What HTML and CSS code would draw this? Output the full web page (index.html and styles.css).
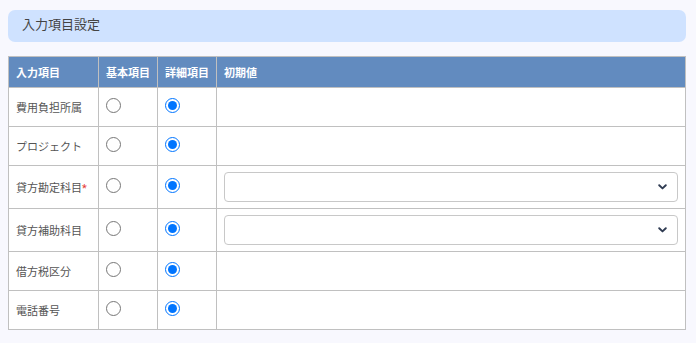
FILE: index.html
```html
<!DOCTYPE html>
<html>
<head>
    <title>入力項目設定</title>
    <meta charset="UTF-8">
    <meta name="viewport" content="width=device-width, initial-scale=1.0">
    <link rel="stylesheet" href="styles.css">
</head>
<body>
    <div class="container">
        <div class="panel-title">入力項目設定</div>
        <table class="item-table">
            <thead>
                <tr>
                    <th class="col-name">入力項目</th>
                    <th class="col-radio">基本項目</th>
                    <th class="col-radio">詳細項目</th>
                    <th>初期値</th>
                </tr>
            </thead>
            <tbody>
                <tr>
                    <td>費用負担所属</td>
                    <td><input type="radio" name="r1"></td>
                    <td><input type="radio" name="r1" checked></td>
                    <td></td>
                </tr>
                <tr>
                    <td>プロジェクト</td>
                    <td><input type="radio" name="r2"></td>
                    <td><input type="radio" name="r2" checked></td>
                    <td></td>
                </tr>
                <tr>
                    <td>貸方勘定科目<span class="required">*</span></td>
                    <td><input type="radio" name="r3"></td>
                    <td><input type="radio" name="r3" checked></td>
                    <td>
                        <div class="select-wrap">
                            <select><option></option></select>
                            <svg class="chevron" width="9" height="6" viewBox="0 0 9 6"><path d="M1.2 1.2 L4.5 4.4 L7.8 1.2" fill="none" stroke="#2f3b52" stroke-width="1.9" stroke-linecap="round" stroke-linejoin="round"/></svg>
                        </div>
                    </td>
                </tr>
                <tr>
                    <td>貸方補助科目</td>
                    <td><input type="radio" name="r4"></td>
                    <td><input type="radio" name="r4" checked></td>
                    <td>
                        <div class="select-wrap">
                            <select><option></option></select>
                            <svg class="chevron" width="9" height="6" viewBox="0 0 9 6"><path d="M1.2 1.2 L4.5 4.4 L7.8 1.2" fill="none" stroke="#2f3b52" stroke-width="1.9" stroke-linecap="round" stroke-linejoin="round"/></svg>
                        </div>
                    </td>
                </tr>
                <tr>
                    <td>借方税区分</td>
                    <td><input type="radio" name="r5"></td>
                    <td><input type="radio" name="r5" checked></td>
                    <td></td>
                </tr>
                <tr>
                    <td>電話番号</td>
                    <td><input type="radio" name="r6"></td>
                    <td><input type="radio" name="r6" checked></td>
                    <td></td>
                </tr>
            </tbody>
        </table>
    </div>
</body>
</html>
```

FILE: styles.css
```css
body {
    margin: 0;
    background-color: #f8f8fe;
    font-family: Roboto, "Noto Sans CJK JP", sans-serif;
    color: #555;
}
.container {
    width: 678px;
    padding: 10px 8px;
}
.panel-title {
    height: 32px;
    line-height: 30px;
    padding: 0 14px;
    background-color: #cfe2ff;
    border-radius: 7px;
    font-size: 13px;
    color: #444;
    box-sizing: border-box;
}
.item-table {
    width: 678px;
    margin-top: 14px;
    border-collapse: collapse;
    background-color: #fff;
    font-size: 11px;
}
.item-table th,
.item-table td {
    border: 1px solid #c0c0c0;
    text-align: left;
    vertical-align: middle;
    padding: 0 7px;
}
.item-table th {
    height: 30px;
    background-color: #628bbf;
    color: #fff;
    font-weight: bold;
}
.item-table td {
    height: 38px;
}
.col-name {
    width: 75px;
}
.col-radio {
    width: 44px;
}
.required {
    color: #e53935;
}
input[type="radio"] {
    width: 15px;
    height: 15px;
    margin: 0 0 4px 0;
    vertical-align: middle;
}
.select-wrap {
    position: relative;
    margin: 6px 0 6px 0;
}
.select-wrap select {
    display: block;
    width: 100%;
    height: 30px;
    border: 1px solid #c8c8c8;
    border-radius: 4px;
    background-color: #fff;
    appearance: none;
    -webkit-appearance: none;
}
.chevron {
    position: absolute;
    right: 11px;
    top: 12px;
}
```
